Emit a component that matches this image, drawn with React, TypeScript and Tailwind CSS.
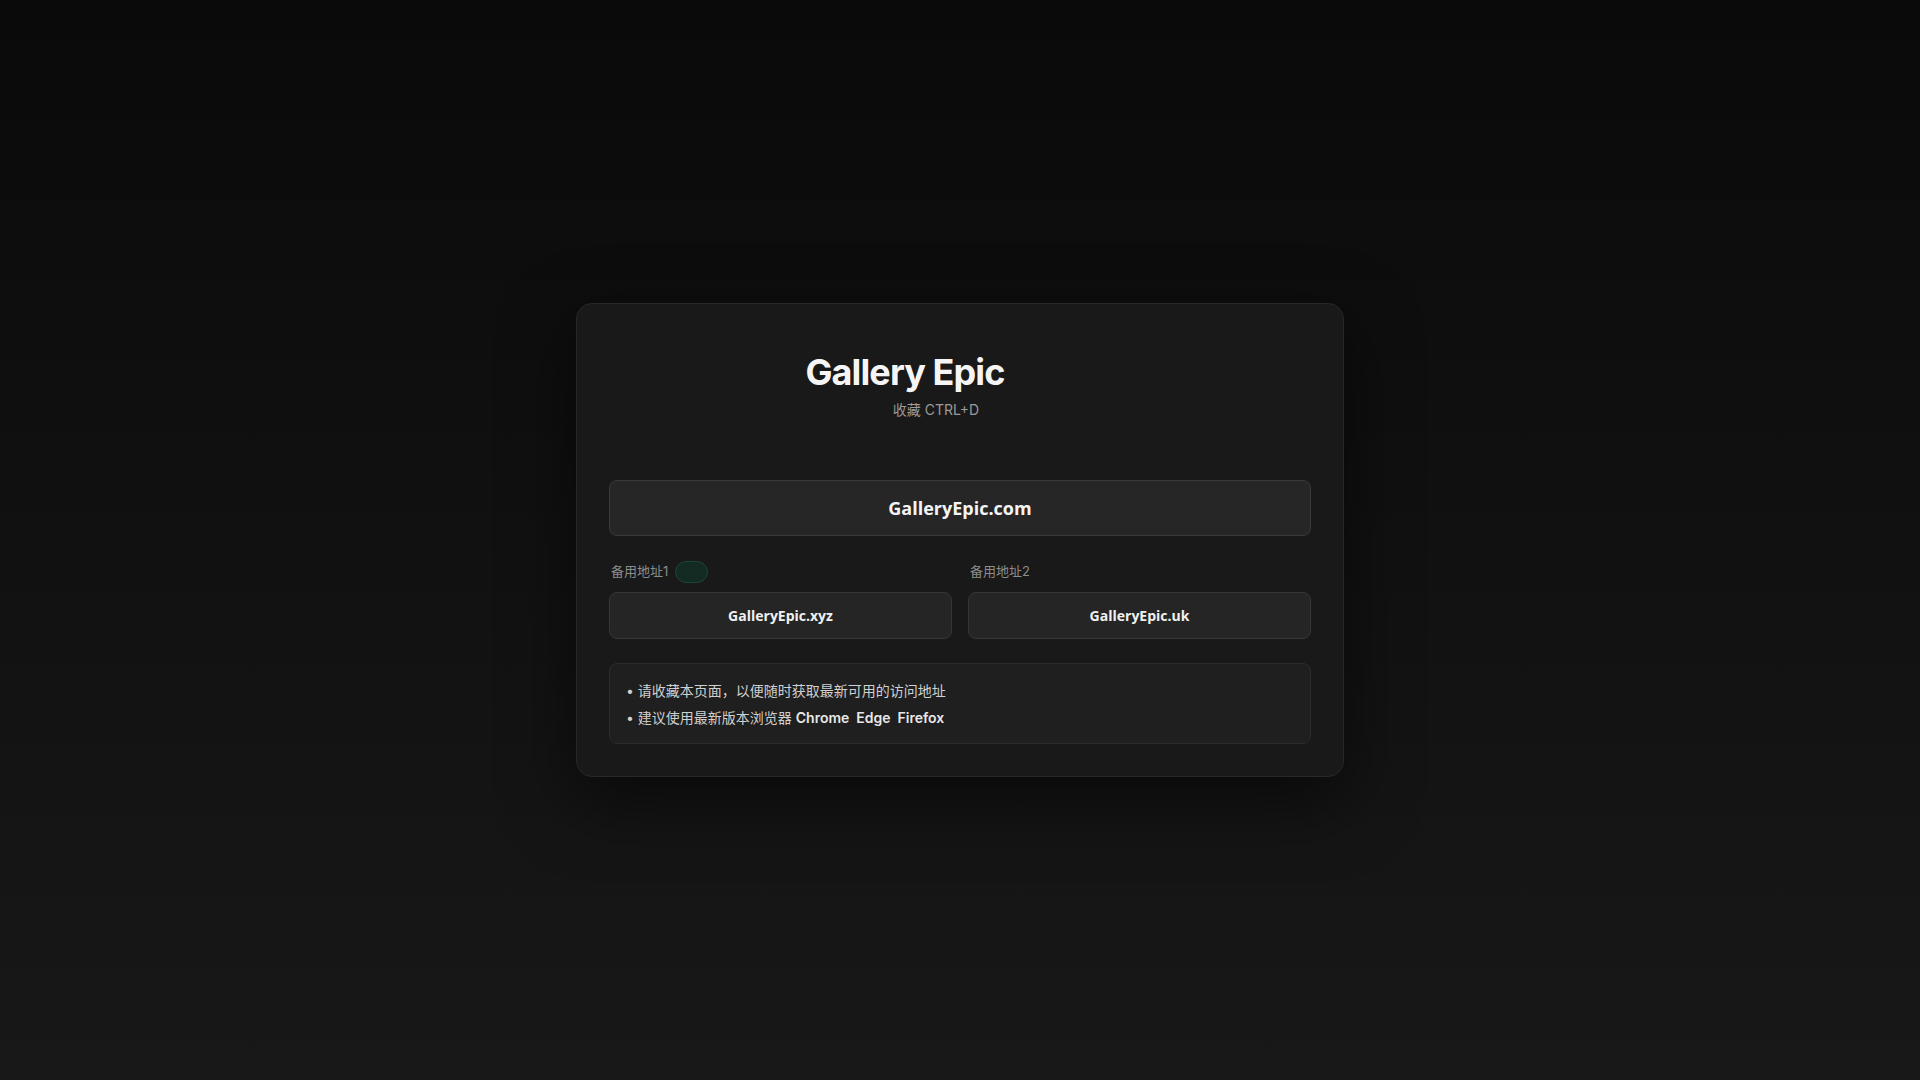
const mirrors = [
  { label: '备用地址1', domain: 'GalleryEpic.xyz', live: true },
  { label: '备用地址2', domain: 'GalleryEpic.uk', live: false },
];

const App = () => {
  return (
    <div className="min-h-screen w-full flex items-center justify-center bg-linear-to-b from-[#0a0a0a] to-[#181818] font-['Inter','Noto_Sans_CJK_SC',sans-serif]">
      <div className="w-[768px] rounded-2xl border border-[#282828] bg-[#191919] p-8 shadow-[0_24px_70px_rgba(0,0,0,0.55)]">
        {/* Header */}
        <div className="flex flex-col items-center">
          <h1 className="mt-4 mr-[110px] text-[36px] leading-[40px] font-bold tracking-tight text-[#f5f5f5]">
            Gallery Epic
          </h1>
          <p className="mt-2 mr-[48px] text-sm leading-5 text-[#9a9a9a]">收藏 CTRL+D</p>
        </div>

        {/* Main domain */}
        <a
          href="#"
          className="mt-[60px] flex h-14 items-center justify-center rounded-lg border border-[#3a3a3a] bg-[#262626] text-[18px] font-bold text-[#f4f4f4] font-['Open_Sans',sans-serif]"
        >
          GalleryEpic.com
        </a>

        {/* Mirrors */}
        <div className="mt-[25px] grid grid-cols-2 gap-4">
          {mirrors.map((m) => (
            <div key={m.domain}>
              <div className="flex h-[22px] items-center gap-[7px] pl-0.5 text-[13px] text-[#8c8c8c]">
                <span>{m.label}</span>
                {m.live && (
                  <span className="h-[22px] w-[33px] rounded-full border border-[#1d4436] bg-[#142b24]" />
                )}
              </div>
              <a
                href="#"
                className="mt-[9px] flex h-[47px] items-center justify-center rounded-lg border border-[#363636] bg-[#252525] text-sm font-bold text-[#f0f0f0] font-['Open_Sans',sans-serif]"
              >
                {m.domain}
              </a>
            </div>
          ))}
        </div>

        {/* Notes */}
        <ul className="mt-6 rounded-lg border border-[#2c2c2c] bg-[#1f1f1f] px-4 pt-[13px] pb-3 text-sm leading-[27px] text-[#d0d0d0]">
          <li>• 请收藏本页面，以便随时获取最新可用的访问地址</li>
          <li>
            • 建议使用最新版本浏览器{' '}
            <span className="font-semibold text-[#e8e8e8]">Chrome</span>
            <span className="ml-[7px] font-semibold text-[#e8e8e8]">Edge</span>
            <span className="ml-[7px] font-semibold text-[#e8e8e8]">Firefox</span>
          </li>
        </ul>
      </div>
    </div>
  );
};

export default App;
